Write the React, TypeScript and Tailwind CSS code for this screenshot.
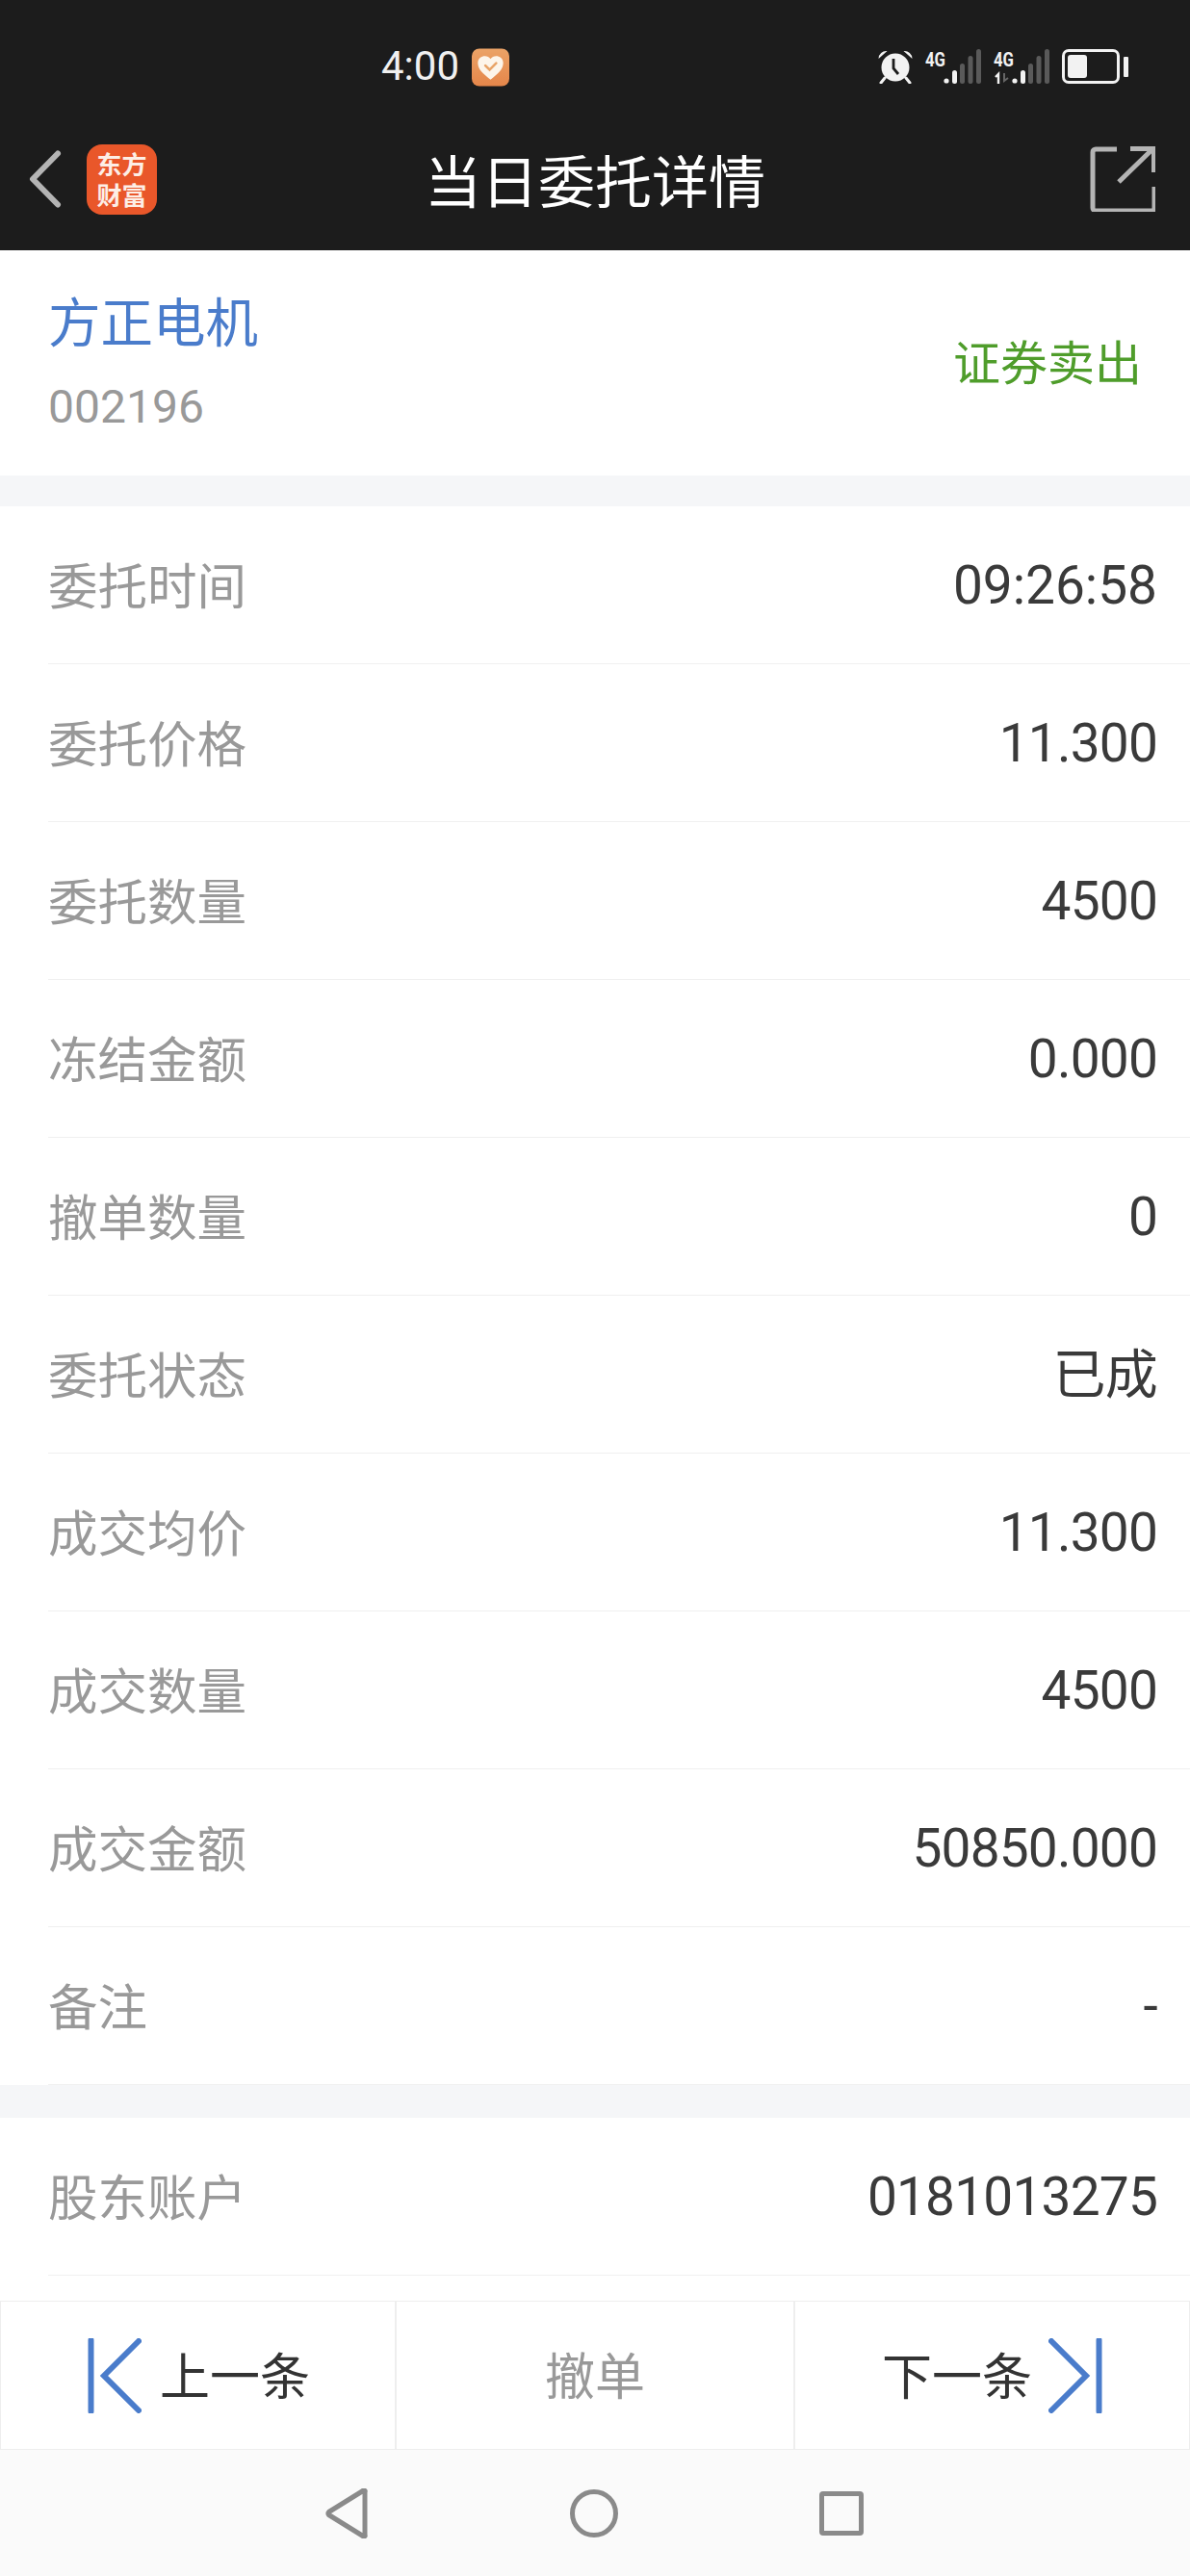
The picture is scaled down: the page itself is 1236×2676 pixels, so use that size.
const rows = [
  { label: "委托时间", value: "09:26:58" },
  { label: "委托价格", value: "11.300" },
  { label: "委托数量", value: "4500" },
  { label: "冻结金额", value: "0.000" },
  { label: "撤单数量", value: "0" },
  { label: "委托状态", value: "已成" },
  { label: "成交均价", value: "11.300" },
  { label: "成交数量", value: "4500" },
  { label: "成交金额", value: "50850.000" },
  { label: "备注", value: "-" },
];

const FONT = "font-['Roboto','Noto_Sans_CJK_SC',sans-serif]";
const CJK = "font-['Noto_Sans_CJK_SC',sans-serif]";

const Row = ({ label, value }: { label: string; value: string }) => (
  <div className="h-[164px] pl-[50px]">
    <div className="h-full flex items-center justify-between border-b border-[#f0f0f0] pr-[34px]">
      <span className={`${CJK} text-[51.5px] text-[#999999] -mt-[3px]`}>{label}</span>
      {/* 時刻だけコロンの字間が広い */}
      <span className={`${FONT} text-[55px] text-[#3a3a3a] mt-[2px] ${value.includes(":") ? "tracking-[0px]" : "tracking-[-0.8px]"}`}>{value}</span>
    </div>
  </div>
);

const Signal = ({ arrows }: { arrows?: boolean }) => (
  <svg width="58" height="36" viewBox="0 0 58 36" className="block">
    <text x="0" y="18" fontFamily="Roboto" fontWeight="700" fontSize="21" fill="#f2f2f2" textLength="21" lengthAdjust="spacingAndGlyphs">4G</text>
    {arrows && (
      <>
        <path d="M2 29l3-3v10" stroke="#f2f2f2" strokeWidth="2.4" fill="none" />
        <path d="M11 25v8l4-3" stroke="#666666" strokeWidth="2" fill="none" />
      </>
    )}
    <circle cx="22" cy="33" r="2.6" fill="#f2f2f2" />
    <rect x="28" y="22" width="5" height="14" rx="2.5" fill="#f2f2f2" />
    <rect x="36" y="15" width="5" height="21" rx="2.5" fill="#5a5a5a" />
    <rect x="44.500" y="7" width="5" height="29" rx="2.5" fill="#5a5a5a" />
    <rect x="53" y="0" width="5" height="36" rx="2.5" fill="#5a5a5a" />
  </svg>
);

const StatusBar = () => (
  <div className="h-[130px] pt-[50px] flex items-start relative">
    <div className="ml-[396px] flex items-start gap-[13px]">
      <span className="font-['Roboto',sans-serif] text-[42px] leading-[38px] text-[#f0f0f0]">4:00</span>
      <svg width="39" height="40" viewBox="0 0 40 40" className="block">
        <defs>
          <linearGradient id="hb" x1="0" y1="0" x2="0" y2="1">
            <stop offset="0" stopColor="#eba367" />
            <stop offset="1" stopColor="#e5864a" />
          </linearGradient>
        </defs>
        <rect width="40" height="40" rx="8" fill="url(#hb)" />
        <path d="M20 33C12 27 6.500 22 6.500 15.500 6.500 10.500 10.500 8 14 8c2.500 0 4.600 1 6 3 1.400-2 3.500-3 6-3 3.500 0 7.500 2.500 7.500 7.500C33.500 22 28 27 20 33z" fill="#fdf5ea" />
        <path d="M14.500 18l4.500 4.500 7-7" stroke="#e9a468" strokeWidth="2.600" fill="none" strokeLinecap="round" />
      </svg>
    </div>
    <div className="absolute left-[911px] top-[51px] flex items-start">
      <svg width="38" height="36" viewBox="0 0 38 36" className="block mr-[12px]">
        <circle cx="19" cy="19" r="14.500" fill="#f2f2f2" />
        <path d="M1.500 10a8 8 0 0 1 9-8zM36.500 10a8 8 0 0 0-9-8z" fill="#f2f2f2" />
        <path d="M8 30l-4 5M30 30l4 5" stroke="#f2f2f2" strokeWidth="3" strokeLinecap="round" />
        <path d="M17 10v10l5 6" stroke="#1c1c1c" strokeWidth="2.800" fill="none" />
      </svg>
      <Signal />
      <div className="w-[13px]" />
      <Signal arrows />
      <div className="w-[13px]" />
      <div className="w-[60px] h-[36px] rounded-[7px] border-[3px] border-[#f2f2f2] p-[3px]">
        <div className="w-[20px] h-full rounded-[3px] bg-[#f2f2f2]" />
      </div>
      <div className="w-[5px] h-[21px] ml-[4px] mt-[8px] bg-[#f2f2f2] rounded-[1px]" />
    </div>
  </div>
);

const NavBar = () => (
  <div className="h-[130px] grid grid-cols-[1fr_auto_1fr] items-center">
    <div className="flex items-center pl-[30px] -mt-[18px]">
      <svg width="34" height="60" viewBox="0 0 34 60" className="block">
        <path d="M30 3.500L4 30l26 26.500" stroke="#b4b4b4" strokeWidth="6" fill="none" strokeLinecap="round" strokeLinejoin="round" />
      </svg>
      <div className={`${CJK} ml-[26px] w-[73px] h-[73px] rounded-[16px] bg-[#e9572a] flex flex-col items-center justify-center text-[26px] leading-[32px] font-bold text-[#fdeee6]`}>
        <span>东方</span>
        <span>财富</span>
      </div>
    </div>
    <span className={`${CJK} text-[59px] text-white -mt-[18px]`}>当日委托详情</span>
    <div className="flex justify-end pr-[36px] -mt-[18px]">
      <svg width="68" height="68" viewBox="0 0 68 68" className="block">
        <path d="M28 3H6a3 3 0 0 0-3 3v58a3 3 0 0 0 3 3h58a3 3 0 0 0 3-3V42" stroke="#b4b4b4" strokeWidth="5" fill="none" />
        <path d="M30 37L65 3M42 2.500h24.500V27" stroke="#b4b4b4" strokeWidth="5" fill="none" />
      </svg>
    </div>
  </div>
);

export default function App() {
  return (
    <div className="w-[1236px] h-[2676px] flex flex-col bg-white overflow-hidden">
      <header className="bg-[#1c1c1c] h-[260px] shrink-0">
        <StatusBar />
        <NavBar />
      </header>

      <main className="flex-1 min-h-0 overflow-hidden">
        <section className="h-[234px] flex items-center justify-between pl-[50px] pr-[50px]">
          <div className="flex flex-col">
            <span className={`${CJK} text-[54.500px] leading-[78px] text-[#4a7ccb] -mt-[8px]`}>方正电机</span>
            <span className="font-['Roboto',sans-serif] text-[48px] leading-[60px] text-[#999999] mt-[22px]">002196</span>
          </div>
          <span className={`${CJK} text-[49px] text-[#4f9d2b] -mt-[6px]`}>证券卖出</span>
        </section>
        <div className="h-[32px] bg-[#f5f6f8]" />
        {rows.map((r) => (
          <Row key={r.label} label={r.label} value={r.value} />
        ))}
        <div className="h-[34px] bg-[#f5f6f8]" />
        <Row label="股东账户" value="0181013275" />
      </main>

      <div className="h-[155px] shrink-0 grid grid-cols-[411px_414px_1fr] border-y border-[#eeeeee] border-x">
        <div className="flex items-center pl-[90px] border-r-2 border-[#eeeeee]">
          <svg width="56" height="78" viewBox="0 0 56 78" className="block">
            <path d="M3.500 2v74" stroke="#4a7ccb" strokeWidth="6" strokeLinecap="round" />
            <path d="M53 3L17 39l36 36" stroke="#4a7ccb" strokeWidth="6" fill="none" strokeLinecap="round" />
          </svg>
          <span className={`${CJK} ml-[19px] text-[52px] text-[#333333] -mt-[3px]`}>上一条</span>
        </div>
        <div className="flex items-center justify-center border-r-2 border-[#eeeeee]">
          <span className={`${CJK} text-[52px] text-[#999999] -mt-[3px]`}>撤单</span>
        </div>
        <div className="flex items-center pl-[90px]">
          <span className={`${CJK} text-[52px] text-[#333333] -mt-[3px]`}>下一条</span>
          <svg width="56" height="78" viewBox="0 0 56 78" className="block ml-[17px]">
            <path d="M52.500 2v74" stroke="#4a7ccb" strokeWidth="6" strokeLinecap="round" />
            <path d="M3 3l36 36L3 75" stroke="#4a7ccb" strokeWidth="6" fill="none" strokeLinecap="round" />
          </svg>
        </div>
      </div>

      <nav className="h-[131px] shrink-0 bg-[#fafafa] flex items-center pl-[338px]">
        <svg width="44" height="52" viewBox="0 0 44 52" className="block">
          <path d="M41 3.500v45a1 1 0 0 1-2 1L3.500 27.500a2 2 0 0 1 0-3L39 2.500a1 1 0 0 1 2 1z" stroke="#8a8a8a" strokeWidth="5" fill="none" strokeLinejoin="round" />
        </svg>
        <div className="ml-[210px] w-[50px] h-[50px] rounded-full border-[5px] border-[#8a8a8a]" />
        <div className="ml-[209px] w-[46px] h-[46px] rounded-[4px] border-[5px] border-[#8a8a8a]" />
      </nav>
    </div>
  );
}
